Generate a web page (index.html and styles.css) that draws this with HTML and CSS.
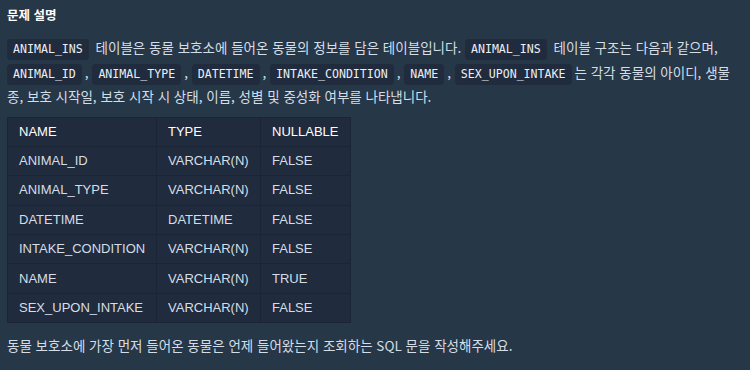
FILE: index.html
```html
<!DOCTYPE html>
<html lang="ko">
<head>
<meta charset="utf-8">
<link rel="stylesheet" href="styles.css">
</head>
<body>
<div class="guide">
  <h6 class="title">문제 설명</h6>
  <p class="desc"><code>ANIMAL_INS</code> 테이블은 동물 보호소에 들어온 동물의 정보를 담은 테이블입니다. <code>ANIMAL_INS</code> 테이블 구조는 다음과 같으며, <code>ANIMAL_ID</code>, <code>ANIMAL_TYPE</code>, <code>DATETIME</code>, <code>INTAKE_CONDITION</code>, <code>NAME</code>, <code>SEX_UPON_INTAKE</code>는 각각 동물의 아이디, 생물 종, 보호 시작일, 보호 시작 시 상태, 이름, 성별 및 중성화 여부를 나타냅니다.</p>
  <table class="schema">
    <colgroup><col class="c1"><col class="c2"><col class="c3"></colgroup>
    <thead>
      <tr><th>NAME</th><th>TYPE</th><th>NULLABLE</th></tr>
    </thead>
    <tbody>
      <tr><td>ANIMAL_ID</td><td>VARCHAR(N)</td><td>FALSE</td></tr>
      <tr><td>ANIMAL_TYPE</td><td>VARCHAR(N)</td><td>FALSE</td></tr>
      <tr><td>DATETIME</td><td>DATETIME</td><td>FALSE</td></tr>
      <tr><td>INTAKE_CONDITION</td><td>VARCHAR(N)</td><td>FALSE</td></tr>
      <tr><td>NAME</td><td>VARCHAR(N)</td><td>TRUE</td></tr>
      <tr><td>SEX_UPON_INTAKE</td><td>VARCHAR(N)</td><td>FALSE</td></tr>
    </tbody>
  </table>
  <p class="desc last">동물 보호소에 가장 먼저 들어온 동물은 언제 들어왔는지 조회하는 SQL 문을 작성해주세요.</p>
</div>
</body>
</html>
```
FILE: styles.css
```css
html, body {
  margin: 0;
  padding: 0;
  background: #263747;
  height: 100%;
}
body {
  font-family: "Noto Sans", "Noto Sans CJK KR", sans-serif;
  color: #d5dee7;
  font-size: 13.5px;
}
.guide {
  padding: 6px 10px 0 7px;
}
.title {
  margin: 0;
  font-size: 12.5px;
  font-weight: 700;
  color: #ffffff;
  line-height: 18px;
  font-family: "Noto Sans CJK KR", sans-serif;
}
.desc {
  margin: 11px 0 0 0;
  line-height: 24.5px;
  font-family: "Noto Sans CJK KR", sans-serif;
}
code {
  font-family: "DejaVu Sans Mono", monospace;
  font-size: 11.6px;
  line-height: 1;
  background: #202b3d;
  color: #e9eff5;
  padding: 3px 6px 4px;
  margin: 0 3px 0 0;
  border-radius: 4px;
}
.schema {
  margin-top: 8px;
  border-collapse: collapse;
  table-layout: fixed;
  width: 343px;
  background: #202b3d;
  font-family: "Liberation Sans", Arial, sans-serif;
  font-size: 13px;
}
.c1 { width: 149px; }
.c2 { width: 104px; }
.c3 { width: 90px; }
.schema tr {
  height: 29.4px;
}
.schema th, .schema td {
  text-align: left;
  padding: 0 11px;
  border: 1px solid #1c2535;
  font-weight: 400;
  color: #d5dee7;
  white-space: nowrap;
  line-height: 18px;
}
.schema th {
  color: #ffffff;
}
.last {
  margin-top: 10px;
}
```
